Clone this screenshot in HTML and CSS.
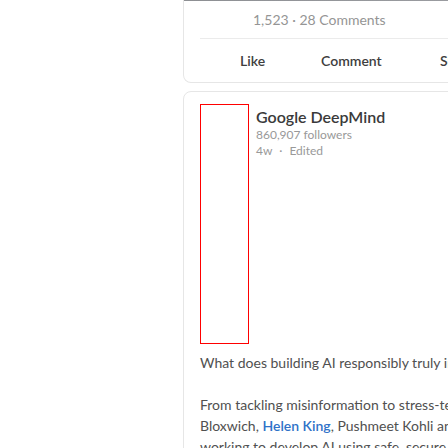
FILE: index.html
```html
<!DOCTYPE html>
<html lang="en">
<head>
<meta charset="utf-8">
<title>Feed</title>
<link rel="stylesheet" href="styles.css">
</head>
<body>
<main class="feed">
  <article class="card card-top">
    <div class="media"></div>
    <div class="stats">1,523 · 28 Comments</div>
    <div class="divider"></div>
    <div class="actions">
      <button class="action action-like">Like</button>
      <button class="action action-comment">Comment</button>
      <button class="action action-share">Share</button>
    </div>
  </article>
  <article class="card card-post">
    <header class="post-head">
      <div class="avatar"></div>
      <div class="author">
        <div class="author-name">Google DeepMind</div>
        <div class="author-meta">860,907 followers</div>
        <div class="author-meta">4w <span class="dot">·</span> Edited</div>
      </div>
    </header>
    <div class="post-body">
      <p class="para">What does building AI responsibly truly involve in practice for our teams?</p>
      <p class="para">From tackling misinformation to stress-testing our models, Dawn<br>Bloxwich, <a class="mention" href="#">Helen King</a>, Pushmeet Kohli and colleagues across Google DeepMind are<br>working to develop AI using safe, secure and responsible practices.</p>
    </div>
  </article>
</main>
</body>
</html>
```
FILE: styles.css
```css
html, body {
  margin: 0;
  padding: 0;
  background: #ffffff;
  overflow: hidden;
}
body {
  font-family: "Segoe UI", Lato, "Noto Sans", sans-serif;
  color: #3a3a3a;
}
.feed {
  margin-left: 183px;
  width: 560px;
  display: flex;
  flex-direction: column;
  gap: 8px;
}
.card {
  border: 1px solid #e6e6e6;
  border-radius: 8px;
  background: #ffffff;
}
.card-top {
  border-top: none;
  border-radius: 0 0 8px 8px;
}
.media {
  height: 1px;
  background: linear-gradient(90deg, #8d8f93 0%, #9a9ca0 50%, #4c5565 75%, #59606e 100%);
}
.stats {
  padding: 9px 0 0 69px;
  height: 28px;
  box-sizing: border-box;
  font-size: 14px;
  line-height: 20px;
  color: #959595;
}
.divider {
  height: 1px;
  margin: 9px 0 0 16px;
  background: #ebebeb;
}
.actions {
  display: flex;
  height: 43px;
  align-items: center;
  padding-left: 56px;
}
.action {
  border: none;
  background: none;
  padding: 0;
  font: 600 14px/20px "Segoe UI", Lato, "Noto Sans", sans-serif;
  color: #3e3e3e;
  text-align: left;
}
.action-like { width: 81px; }
.action-comment { width: 119px; }
.card-post {
  padding: 12px 16px 0;
}
.post-head {
  display: flex;
  gap: 7px;
  align-items: flex-start;
}
.avatar {
  width: 49px;
  height: 240px;
  box-sizing: border-box;
  border: 1px solid #ff0000;
  flex: none;
}
.author {
  padding-top: 3px;
}
.author-name {
  font-size: 16px;
  line-height: 20px;
  font-weight: 600;
  color: #3a3a3a;
}
.author-meta {
  font-size: 12px;
  line-height: 16px;
  color: #999999;
}
.dot {
  margin: 0 4px;
}
.post-body {
  padding-top: 8px;
}
.para {
  margin: 0 0 21px;
  font-size: 14px;
  line-height: 21px;
  color: #505050;
  white-space: nowrap;
}
.mention {
  color: #2f72c8;
  font-weight: 600;
  text-decoration: none;
}
```
